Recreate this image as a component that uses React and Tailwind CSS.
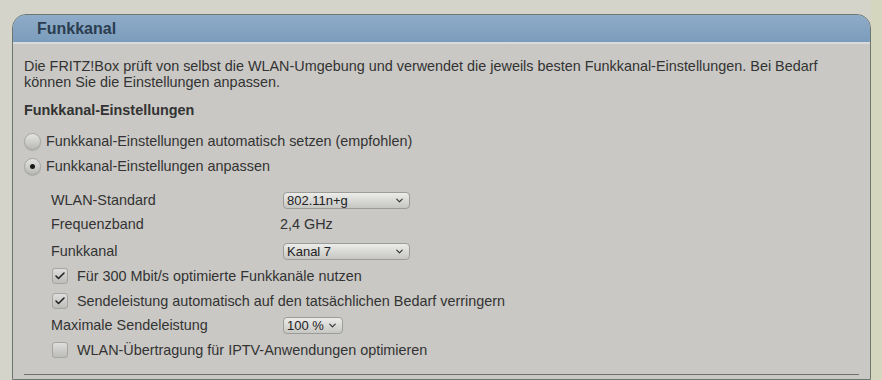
import { ChevronDown, Check } from 'lucide-react'

function Radio({ checked }) {
  return (
    <span className="w-[17px] h-[17px] rounded-full border border-[#a6a6a3] bg-gradient-to-b from-[#e4e4e2] to-[#b9b9b6] shadow-[0_1px_1px_rgba(0,0,0,0.15)] flex items-center justify-center shrink-0">
      {checked && <span className="w-[5px] h-[5px] rounded-full bg-[#1a1a1a]" />}
    </span>
  )
}

function Checkbox({ checked }) {
  return (
    <span className="w-[16px] h-[16px] rounded-[3px] border border-[#a5a5a2] bg-gradient-to-b from-[#dedede] to-[#bcbcb9] flex items-center justify-center shrink-0">
      {checked && <Check size={12} strokeWidth={3.2} className="text-[#222]" />}
    </span>
  )
}

function Select({ value, width }) {
  return (
    <span className={`${width} h-[17px] rounded-[4px] border border-[#9c9c99] bg-gradient-to-b from-[#ececea] to-[#c6c6c3] flex items-center justify-between pl-[3px] pr-[4px] text-[13px] leading-none text-[#222]`}>
      <span>{value}</span>
      <ChevronDown size={11} strokeWidth={2.5} className="text-[#333]" />
    </span>
  )
}

export default function App() {
  return (
    <div className="w-[882px] h-[380px] bg-[#d5d4cb] overflow-hidden flex" style={{ fontFamily: '"Liberation Sans", Arial, sans-serif' }}>
      <div className="ml-[12px] mt-[14px] w-[859px] border border-[#6d7772] rounded-t-[14px] bg-[#c9c8c4] overflow-hidden shrink-0">
        <div className="h-[27px] bg-gradient-to-b from-[#8eacc9] to-[#7c9cbc] pl-[24px] pt-[1px] flex items-center text-[16px] font-bold text-[#2b3d4f]">
          Funkkanal
        </div>
        <div className="h-[2px] bg-[#d9dadb]" />
        <div className="px-[11px] pt-[14px] text-[14.4px] leading-[16px] text-[#333]">
          <p>
            Die FRITZ!Box prüft von selbst die WLAN-Umgebung und verwendet die jeweils besten Funkkanal-Einstellungen. Bei Bedarf können Sie die Einstellungen anpassen.
          </p>
          <p className="mt-[12px] font-bold">Funkkanal-Einstellungen</p>
          <div className="mt-[15px] flex items-center gap-[5px] h-[16px]">
            <Radio />
            <span>Funkkanal-Einstellungen automatisch setzen (empfohlen)</span>
          </div>
          <div className="mt-[9px] flex items-center gap-[5px] h-[16px]">
            <Radio checked />
            <span>Funkkanal-Einstellungen anpassen</span>
          </div>
          <div className="mt-[18px] pl-[27px] flex flex-col gap-[9px]">
            <div className="flex items-center h-[16px]">
              <span className="w-[232px]">WLAN-Standard</span>
              <Select value="802.11n+g" width="w-[127px]" />
            </div>
            <div className="flex items-center h-[16px] -mt-[1px]">
              <span className="w-[229px]">Frequenzband</span>
              <span>2,4 GHz</span>
            </div>
            <div className="flex items-center h-[16px] mt-[2px]">
              <span className="w-[232px]">Funkkanal</span>
              <Select value="Kanal 7" width="w-[127px]" />
            </div>
            <div className="flex items-center gap-[9px] h-[16px] pl-[1px]">
              <Checkbox checked />
              <span>Für 300 Mbit/s optimierte Funkkanäle nutzen</span>
            </div>
            <div className="flex items-center gap-[9px] h-[16px] pl-[1px]">
              <Checkbox checked />
              <span>Sendeleistung automatisch auf den tatsächlichen Bedarf verringern</span>
            </div>
            <div className="flex items-center h-[16px] -mt-[1px]">
              <span className="w-[232px]">Maximale Sendeleistung</span>
              <Select value="100 %" width="w-[60px]" />
            </div>
            <div className="flex items-center gap-[9px] h-[16px] pl-[1px]">
              <Checkbox />
              <span>WLAN-Übertragung für IPTV-Anwendungen optimieren</span>
            </div>
          </div>
          <div className="mt-[16px] h-px bg-[#6f6f6c]" />
        </div>
      </div>
      <div className="flex-1 bg-[#d5d6be]" />
    </div>
  )
}
